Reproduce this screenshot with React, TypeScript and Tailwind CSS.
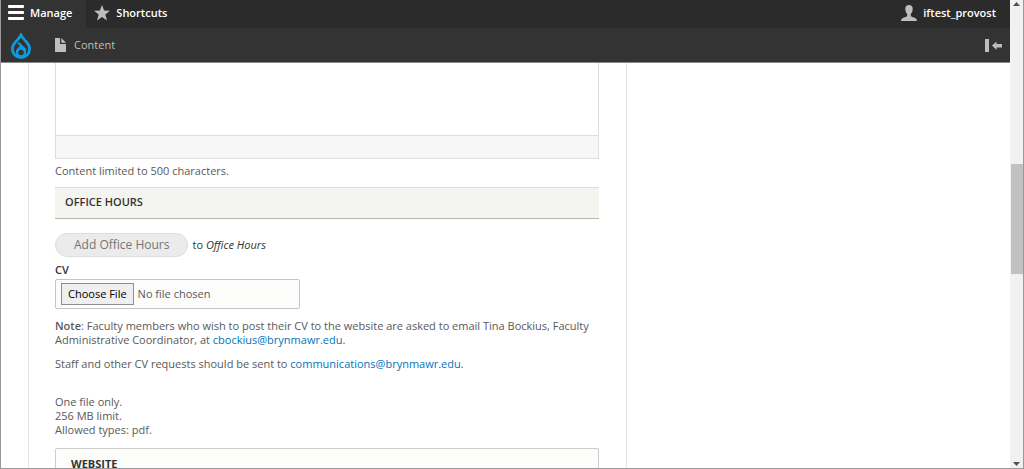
import { PropsWithChildren } from 'react';

function App() {
    return (
        <div className="flex h-screen overflow-hidden border-r border-b border-l border-[#999] bg-white font-['Open_Sans',sans-serif] text-[11px] leading-[14px] text-[#595959]">
            <div className="flex min-w-0 flex-1 flex-col">
                <Toolbar />
                <main className="flex min-h-0 flex-1 overflow-hidden pl-[27px]">
                    <ProfileForm />
                </main>
            </div>
            <Scrollbar />
        </div>
    );
}

const Toolbar = () => {
    return (
        <header className="shrink-0 border-b border-[#888] bg-[#333] text-[#ddd]">
            <nav className="flex h-7 bg-[#2b2b2b] pb-0.5 font-semibold text-white">
                <a href="#" className="-mb-0.5 flex items-center gap-1.5 bg-[#333] pr-3.5 pb-0.5 pl-[7px]">
                    <svg width="16" height="16" viewBox="0 0 16 16" fill="#fff">
                        <rect y="0" width="16" height="3" rx="1" />
                        <rect y="6" width="16" height="3" rx="1" />
                        <rect y="12" width="16" height="3" rx="1" />
                    </svg>
                    Manage
                </a>
                <a href="#" className="flex items-center gap-1.5 pl-2">
                    <svg width="16" height="16" viewBox="0 0 16 16" fill="#bebebe">
                        <path d="M8 0l2.100 5.600 5.900.2-4.700 3.700L13 15.500 8 12.100 3 15.500l1.700-6L0 5.800l5.900-.2z" />
                    </svg>
                    Shortcuts
                </a>
                <a href="#" className="ml-auto flex items-center gap-1.5 pr-3.5">
                    <svg width="16" height="16" viewBox="0 0 16 16" fill="#bebebe">
                        <path d="M8 0C5.600 0 4.200 1.600 4.300 4c.1 2.200.8 3.900 1.900 5v1.500c0 1-1 1.300-2.400 1.700C1.700 12.800 0 13.500 0 16h16c0-2.500-1.700-3.200-3.800-3.800-1.400-.4-2.400-.7-2.400-1.700V9c1.100-1.100 1.800-2.800 1.900-5C11.800 1.600 10.400 0 8 0z" />
                    </svg>
                    iftest_provost
                </a>
            </nav>
            <nav className="flex h-[34px] items-center pr-2 pl-2.5">
                <a href="#" aria-label="Home" className="pt-0.5">
                    <svg width="20" height="26" viewBox="0 0 20 26" fill="none" stroke="#0f9bdc" strokeWidth="2.800">
                        <path d="M10 2C9 4.500 7 6.400 5.200 8.200 3 10.400 1.400 12.900 1.400 16a8.600 8.600 0 0 0 17.200 0c0-3.100-1.600-5.600-3.800-7.800C13 6.400 11 4.500 10 2z" />
                        <circle cx="10" cy="19.500" r="4" strokeWidth="2.400" />
                        <path d="M7.200 9.800l7.800 7.600M10.500 13C8 15.200 6.500 16.500 5.800 19" strokeWidth="2.300" />
                    </svg>
                </a>
                <a href="#" className="ml-6 flex items-center gap-2 text-[#bebebe]">
                    <svg width="11" height="14" viewBox="0 0 11 14" fill="#bebebe">
                        <path d="M0 0h5v6h6v8H0zM6.300 0L11 4.700H6.300z" />
                    </svg>
                    Content
                </a>
                <button type="button" aria-label="Vertical orientation" className="ml-auto">
                    <svg width="17" height="13" viewBox="0 0 17 13" fill="#bebebe">
                        <path d="M0 0h4v13H0zM7 6.500L11.500 2.500v2.500H17v3.500h-5.500V11z" />
                    </svg>
                </button>
            </nav>
        </header>
    );
};

const ProfileForm = () => {
    return (
        <form className="flex w-full max-w-[599px] flex-col self-start border-x border-[#e4e4e4] pr-[27px] pl-[26px]">
            {/* bottom end of the rich text editor */}
            <div className="border-x border-b border-[#ddd]">
                <div className="h-[72px]" />
                <div className="h-[23px] border-t border-[#ddd] bg-[#f7f7f7]" />
            </div>
            <p className="mt-[5px]">Content limited to 500 characters.</p>

            <h4 className="mt-[9px] flex h-8 items-center border-t border-b border-t-[#ddd] border-b-[#b5b5b0] bg-[#f4f5f0] px-2.5 pb-0.5 font-semibold text-[#333]">
                OFFICE HOURS
            </h4>
            <div className="mt-3.5 flex items-center gap-1 text-[#333]">
                <button
                    type="button"
                    className="h-6 rounded-full border border-[#ddd] bg-[#ebebeb] px-[18px] text-[12px] text-[#757575]"
                >
                    Add Office Hours
                </button>
                <span>
                    to <em>Office Hours</em>
                </span>
            </div>

            <label htmlFor="cv" className="mt-1.5 self-start font-semibold text-[#333]">
                CV
            </label>
            <input
                id="cv"
                type="file"
                className="mt-0.5 h-[30px] w-[245px] rounded-xs border border-[#c4c4c0] bg-[#fcfcfa] px-[5px] py-[3px] file:mr-1 file:h-[22px] file:rounded-none file:border file:border-solid file:border-[#8f8f8f] file:bg-[#efefef] file:px-1.5 file:text-black"
            />

            <div className="mt-2.5 flex flex-col gap-2.5">
                <p>
                    <strong className="font-semibold">Note</strong>: Faculty members who wish to post their CV to the
                    website are asked to email Tina Bockius, Faculty Administrative Coordinator, at{' '}
                    <MailLink>cbockius@brynmawr.edu</MailLink>.
                </p>
                <p>
                    Staff and other CV requests should be sent to <MailLink>communications@brynmawr.edu</MailLink>.
                </p>
            </div>
            <p className="mt-6">
                One file only.
                <br />
                256 MB limit.
                <br />
                Allowed types: pdf.
            </p>

            <fieldset className="mt-[11px] h-24 rounded-t-xs border border-[#ccc] bg-[#fcfcfa] px-[15px] pt-2">
                <h4 className="font-bold text-[#333]">WEBSITE</h4>
            </fieldset>
        </form>
    );
};

const MailLink = (props: PropsWithChildren) => {
    return (
        <a href="#" className="text-[#0074bd]">
            {props.children}
        </a>
    );
};

const Scrollbar = () => {
    return (
        <div className="flex w-[13px] shrink-0 flex-col items-center bg-[#f1f1f1] py-0.5">
            <svg width="7" height="4" viewBox="0 0 7 4" fill="#505050">
                <path d="M3.500 0L7 4H0z" />
            </svg>
            <div className="grow-[157]" />
            <div className="w-3 grow-[109] self-end bg-[#c1c1c1]" />
            <div className="grow-[186]" />
            <svg width="7" height="4" viewBox="0 0 7 4" fill="#505050">
                <path d="M3.500 4L7 0H0z" />
            </svg>
        </div>
    );
};

export default App;
